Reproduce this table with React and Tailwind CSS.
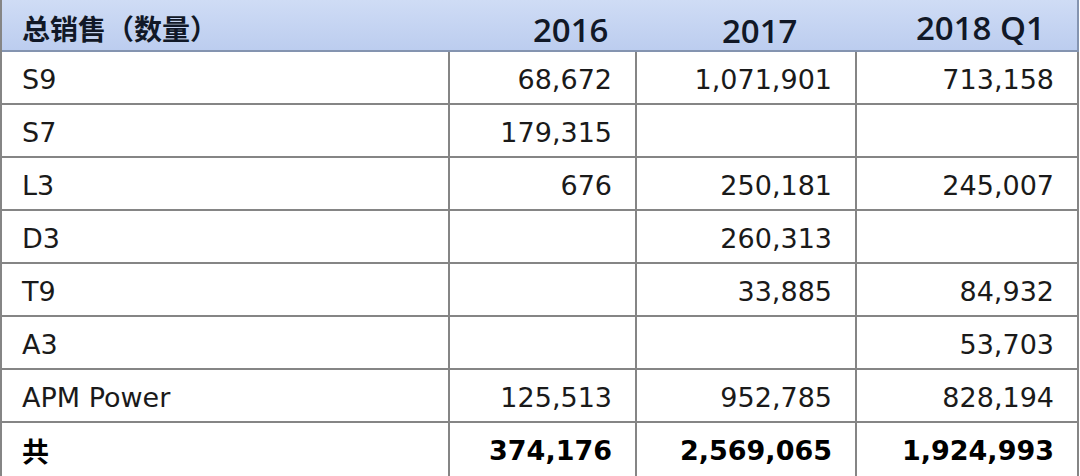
const rows = [
  { name: "S9", a: "68,672", b: "1,071,901", c: "713,158" },
  { name: "S7", a: "179,315", b: "", c: "" },
  { name: "L3", a: "676", b: "250,181", c: "245,007" },
  { name: "D3", a: "", b: "260,313", c: "" },
  { name: "T9", a: "", b: "33,885", c: "84,932" },
  { name: "A3", a: "", b: "", c: "53,703" },
  { name: "APM Power", a: "125,513", b: "952,785", c: "828,194" },
];

const body = { fontFamily: '"DejaVu Sans", Verdana, "Noto Sans CJK SC", sans-serif' };
const head = { fontFamily: '"Open Sans", Arial, "Noto Sans CJK SC", sans-serif' };
const cjk = { fontFamily: '"Noto Sans CJK SC", sans-serif' };

function Cell({ children, right }) {
  return (
    <div
      className={`h-[53px] border-b-2 border-r-2 border-[#858585] flex items-center pt-[5px] text-[27px] text-[#1a1a1a] ${
        right ? "justify-end pr-[23px]" : "pl-[20px]"
      }`}
    >
      {children}
    </div>
  );
}

function Total({ children, right }) {
  return (
    <div
      className={`h-[53px] border-r-2 border-[#858585] flex items-center pt-[3px] text-[27px] font-bold text-black ${
        right ? "justify-end pr-[23px]" : "pl-[20px]"
      }`}
      style={right ? undefined : cjk}
    >
      {children}
    </div>
  );
}

export default function App() {
  return (
    <div className="w-[1080px] h-[476px] bg-white overflow-hidden" style={body}>
      <div className="w-[1079px] border-l-2 border-[#858585]">
        <div
          className="h-[52px] grid grid-cols-[448px_187px_220px_222px] border-b-2 border-r-2 border-[#8494b0] bg-gradient-to-b from-[#cfdcf5] to-[#bccdef] text-[#111827]"
          style={head}
        >
          <div className="flex items-center pl-[20px] pt-[1px] text-[28px] font-bold" style={cjk}>
            总销售（数量）
          </div>
          <div className="flex items-center pl-[83px] pt-[4px] text-[33px] font-semibold">2016</div>
          <div className="flex items-center pl-[85px] pt-[6px] text-[33px] font-semibold">2017</div>
          <div className="flex items-center pl-[59px] pt-[0px] text-[33px] font-semibold">2018 Q1</div>
        </div>
        <div className="grid grid-cols-[448px_187px_220px_222px]">
          {rows.map((r) => (
            <div key={r.name} className="contents">
              <Cell>{r.name}</Cell>
              <Cell right>{r.a}</Cell>
              <Cell right>{r.b}</Cell>
              <Cell right>{r.c}</Cell>
            </div>
          ))}
          <Total>共</Total>
          <Total right>374,176</Total>
          <Total right>2,569,065</Total>
          <Total right>1,924,993</Total>
        </div>
      </div>
    </div>
  );
}
